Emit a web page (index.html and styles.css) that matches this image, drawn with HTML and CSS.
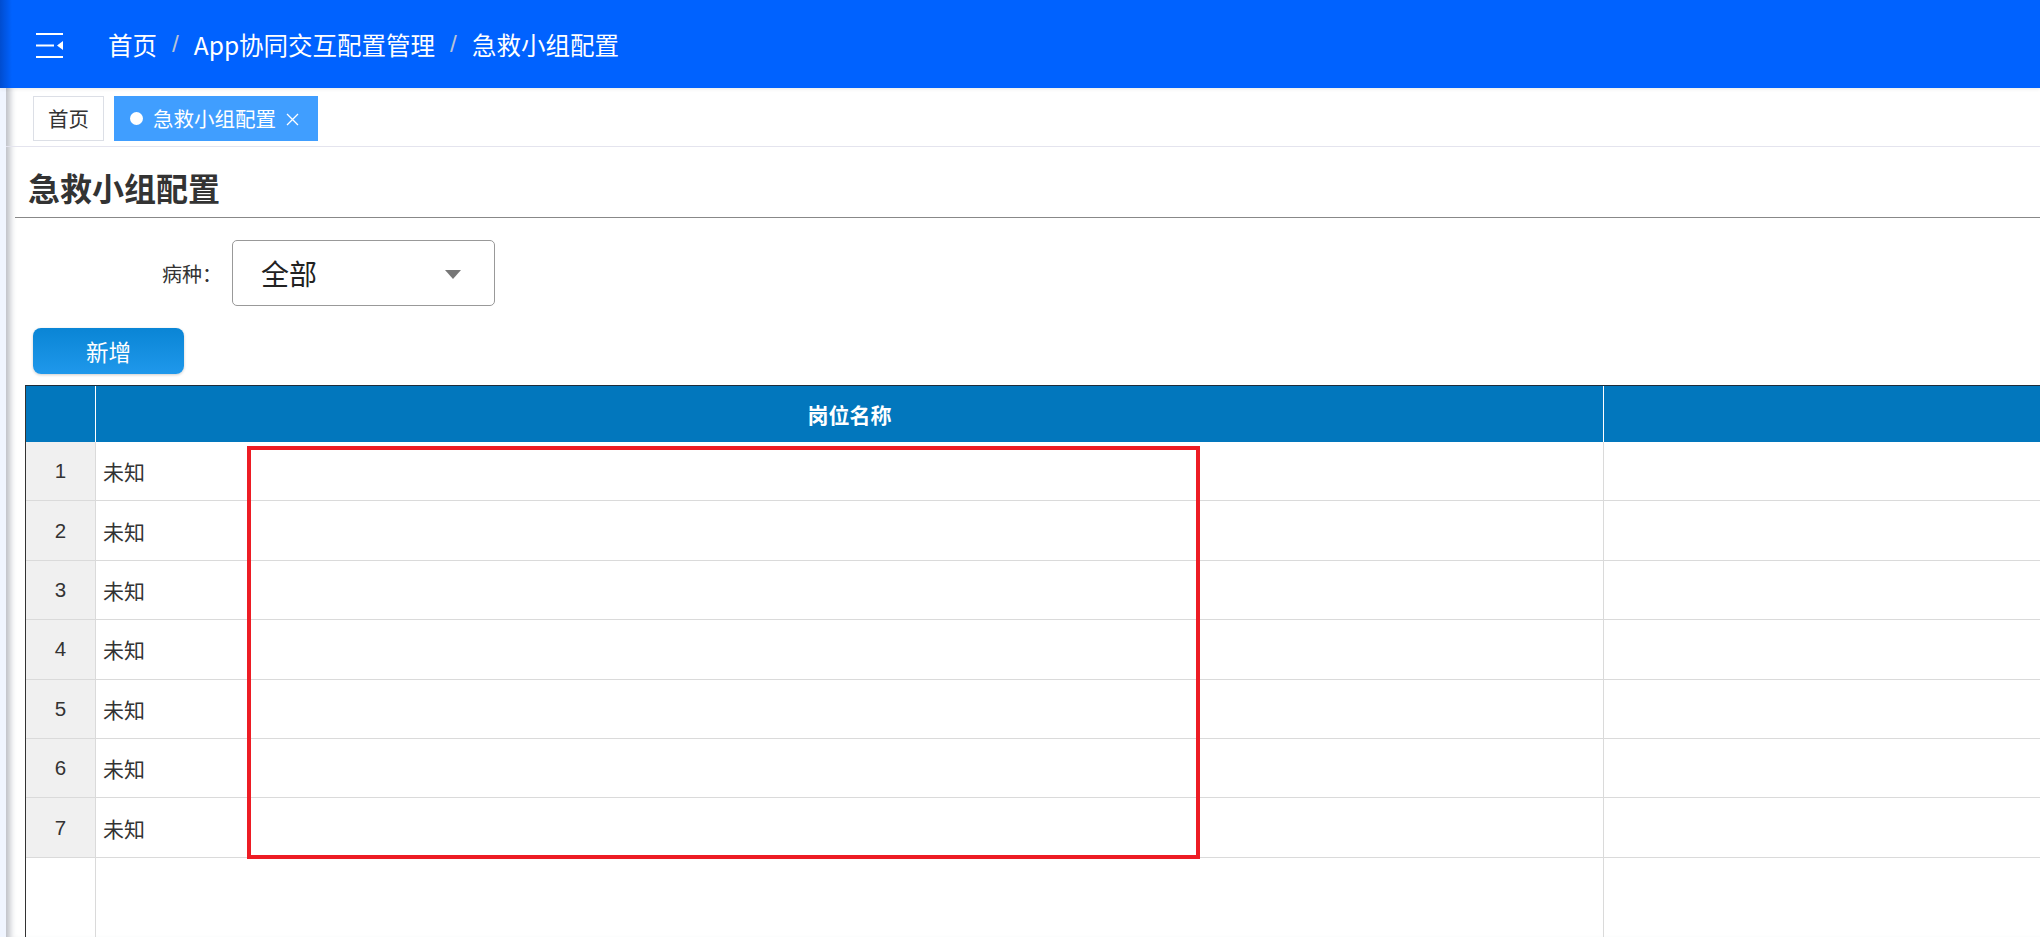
FILE: index.html
```html
<!DOCTYPE html>
<html lang="zh-CN">
<head>
<meta charset="utf-8">
<title>急救小组配置</title>
<link rel="stylesheet" href="styles.css">
</head>
<body>
<header class="topbar">
  <svg class="hamburger" width="28" height="26" viewBox="0 0 28 26">
    <rect x="0" y="1" width="27" height="2" fill="#fff"/>
    <rect x="0" y="12.5" width="18" height="2" fill="#fff"/>
    <rect x="0" y="24" width="27" height="2" fill="#fff"/>
    <polygon points="21,13.5 27,9 27,18" fill="#fff"/>
  </svg>
  <nav class="breadcrumb">
    <span class="crumb">首页</span><span class="sep">/</span><span class="crumb">App协同交互配置管理</span><span class="sep">/</span><span class="crumb">急救小组配置</span>
  </nav>
</header>
<div class="layout">
  <aside class="sidebar"></aside>
  <main class="main">
    <div class="tabbar">
      <div class="tab">首页</div>
      <div class="tab active"><span class="dot"></span><span>急救小组配置</span>
        <svg class="close" width="13" height="13" viewBox="0 0 13 13"><path d="M1 1L12 12M12 1L1 12" stroke="#fff" stroke-width="1.3"/></svg>
      </div>
    </div>
    <h1 class="page-title">急救小组配置</h1>
    <div class="filter">
      <label class="filter-label">病种：</label>
      <div class="select"><span>全部</span><span class="caret"></span></div>
    </div>
    <button class="btn-add">新增</button>
    <div class="grid">
      <div class="row head"><div class="cell"></div><div class="cell">岗位名称</div><div class="cell"></div></div>
      <div class="row"><div class="cell idx">1</div><div class="cell txt">未知</div><div class="cell"></div></div>
      <div class="row"><div class="cell idx">2</div><div class="cell txt">未知</div><div class="cell"></div></div>
      <div class="row"><div class="cell idx">3</div><div class="cell txt">未知</div><div class="cell"></div></div>
      <div class="row"><div class="cell idx">4</div><div class="cell txt">未知</div><div class="cell"></div></div>
      <div class="row"><div class="cell idx">5</div><div class="cell txt">未知</div><div class="cell"></div></div>
      <div class="row"><div class="cell idx">6</div><div class="cell txt">未知</div><div class="cell"></div></div>
      <div class="row"><div class="cell idx">7</div><div class="cell txt">未知</div><div class="cell"></div></div>
      <div class="row filler"><div class="cell"></div><div class="cell"></div><div class="cell"></div></div>
      <div class="highlight"></div>
    </div>
  </main>
</div>
</body>
</html>
```
FILE: styles.css
```css
* { box-sizing: border-box; }
html, body {
  margin: 0;
  padding: 0;
  overflow: hidden;
  height: 937px;
  background: #fff;
  font-family: "Noto Sans CJK SC", "Liberation Sans", sans-serif;
  color: #333;
}
.topbar {
  height: 88px;
  display: flex;
  align-items: center;
  background: linear-gradient(to right, rgba(0,0,40,0.22), rgba(0,0,40,0) 12px), #0062ff;
  box-shadow: 0 1px 4px rgba(0,0,0,0.08);
  position: relative;
  z-index: 2;
}
.hamburger { margin-left: 36px; margin-top: 1px; }
.breadcrumb {
  margin-left: 44px;
  font-size: 24.5px;
  color: #fff;
  display: flex;
  align-items: center;
}
.sep { color: #b8c2d6; margin: 0 15px; font-family: "Liberation Sans", sans-serif; }
.layout { display: flex; height: 849px; }
.sidebar { width: 6px; background: #f0f5ff; flex: none; }
.main {
  flex: none;
  width: 2034px;
  background: #fff;
  box-shadow: inset 9px 0 6px -5px rgba(60,70,90,0.35);
  overflow: hidden;
}
.tabbar {
  height: 59px;
  padding: 8px 0 0 27px;
  border-bottom: 1px solid #e4e4ee;
  display: flex;
  gap: 10px;
  align-items: flex-start;
}
.tab {
  height: 45px;
  border: 1px solid #dcdfe6;
  font-size: 20.5px;
  line-height: 43px;
  padding: 0 14px;
  color: #333;
  background: #fff;
  display: flex;
  align-items: center;
}
.tab.active {
  background: #409eff;
  border-color: #409eff;
  color: #fff;
  padding: 0 18px 0 15px;
}
.dot {
  width: 13px; height: 13px; border-radius: 50%;
  background: #fff; margin-right: 10px;
}
.close { margin-left: 10px; margin-top: 2px; }
.page-title {
  margin: 0 0 0 9px;
  padding: 20px 0 10px 13px;
  line-height: 40px;
  font-size: 32px;
  font-weight: 700;
  color: #333;
  border-bottom: 1px solid #888;
}
.filter {
  margin-top: 22px;
  display: flex;
  align-items: center;
}
.filter-label {
  width: 160px;
  margin-left: 56px;
  margin-right: 10px;
  text-align: right;
  font-size: 20px;
  color: #333;
}
.select {
  width: 263px;
  height: 66px;
  border: 1px solid #999;
  border-radius: 5px;
  display: flex;
  align-items: center;
  justify-content: space-between;
  padding: 0 33px 0 28px;
  font-size: 28px;
  color: #222;
}
.caret {
  width: 0; height: 0;
  border-left: 8.5px solid transparent;
  border-right: 8.5px solid transparent;
  border-top: 9px solid #777;
  margin-top: 2px;
}
.btn-add {
  display: block;
  margin: 22px 0 0 27px;
  width: 151px;
  height: 46px;
  border: none;
  border-radius: 8px;
  background: linear-gradient(#0a85d5, #1f98eb);
  color: #fff;
  font-family: inherit;
  font-size: 22.5px;
  box-shadow: 0 1px 3px rgba(0,0,0,0.2);
  padding: 0;
}
.grid {
  position: relative;
  margin: 11px 0 0 19px;
  width: 2400px;
  height: 600px;
  border-left: 1px solid #333;
  border-top: 1px solid #1e2c3a;
}
.row {
  display: grid;
  grid-template-columns: 70px 1508px 1fr;
  height: 59.4px;
}
.row.head { height: 56px; }
.cell {
  border-right: 1px solid #dadada;
  border-bottom: 1px solid #dadada;
  display: flex;
  align-items: center;
}
.head .cell {
  background: #0277bd;
  border-right: 1px solid #fff;
  border-bottom: none;
  color: #fff;
  font-weight: 700;
  font-size: 21px;
  justify-content: center;
}
.idx {
  background: #f0f0f0;
  justify-content: center;
  font-family: "Liberation Sans", sans-serif;
  font-size: 20.5px;
  color: #333;
}
.txt {
  padding-left: 7px;
  font-size: 21px;
  color: #333;
}
.row.filler { height: 200px; }
.filler .cell { border-bottom: none; }
.highlight {
  position: absolute;
  left: 221px;
  top: 60px;
  width: 953px;
  height: 413px;
  border: 4px solid #ed1c24;
  pointer-events: none;
}
```
